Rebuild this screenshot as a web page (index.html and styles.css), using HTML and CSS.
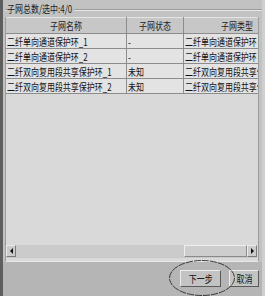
FILE: index.html
```html
<!DOCTYPE html>
<html>
<head>
<meta charset="utf-8">
<link rel="stylesheet" href="styles.css">
</head>
<body>
<div class="win">
  <div class="group">
    <div class="legend"><span class="t legend-text">子网总数/选中:4/0</span></div>
    <div class="panel">
      <div class="grid-wrap">
        <table class="grid">
          <colgroup><col class="c1"><col class="c2"><col class="c3"></colgroup>
          <thead>
            <tr><th><span class="t tc">子网名称</span></th><th><span class="t tc">子网状态</span></th><th><span class="t tc">子网类型</span></th></tr>
          </thead>
          <tbody>
            <tr><td><span class="t">二纤单向通道保护环_1</span></td><td><span class="t">-</span></td><td><span class="t">二纤单向通道保护环</span></td></tr>
            <tr><td><span class="t">二纤单向通道保护环_2</span></td><td><span class="t">-</span></td><td><span class="t">二纤单向通道保护环</span></td></tr>
            <tr><td><span class="t">二纤双向复用段共享保护环_1</span></td><td><span class="t">未知</span></td><td><span class="t">二纤双向复用段共享保护环</span></td></tr>
            <tr><td><span class="t">二纤双向复用段共享保护环_2</span></td><td><span class="t">未知</span></td><td><span class="t">二纤双向复用段共享保护环</span></td></tr>
          </tbody>
        </table>
      </div>
      <div class="hscroll">
        <div class="sb-btn"><span class="arrow-left"></span></div>
        <div class="sb-track"></div>
        <div class="sb-thumb"></div>
        <div class="sb-btn"><span class="arrow-right"></span></div>
      </div>
    </div>
  </div>
  <div class="buttons">
    <div class="btn btn-next"><span class="t tc">下一步</span></div>
    <div class="btn btn-cancel"><span class="t tc">取消</span></div>
  </div>
  <svg class="mark" width="70" height="40" viewBox="0 0 70 40"><ellipse cx="34" cy="19" rx="32.5" ry="17.5" fill="none" stroke="#2a2a2a" stroke-width="0.9" stroke-dasharray="7 1"/></svg>
</div>
</body>
</html>
```

FILE: styles.css
```css
* { box-sizing: border-box; }
html, body { margin: 0; padding: 0; }
body {
  width: 265px;
  height: 296px;
  overflow: hidden;
  background: #bdbdbd;
  font-family: "Noto Sans CJK SC", "Liberation Sans", sans-serif;
  font-size: 10.5px;
  color: #111;
}
.t {
  display: inline-block;
  white-space: nowrap;
  transform: scaleX(0.76);
  transform-origin: left center;
}
.tc { transform-origin: center center; }
.win {
  position: relative;
  width: 265px;
  height: 296px;
  border-left: 3px solid #5e5e5e;
  border-right: 3px solid #cfcfcf;
  background: #c2c2c2;
  display: flex;
  flex-direction: column;
}
.group {
  padding-left: 2px;
}
.legend {
  height: 17px;
  padding-top: 1px;
  padding-left: 2px;
  background: linear-gradient(to bottom, transparent 9px, #9a9a9a 9px, #9a9a9a 10px, #e6e6e6 10px, #e6e6e6 11px, transparent 11px);
}
.legend-text {
  line-height: 13px;
  color: #222;
  background: #c2c2c2;
  padding-right: 3px;
}
.panel {
  width: 254px;
  height: 245px;
  background: #d9d9d9;
  border-left: 1px solid #9c9c9c;
  border-right: 1px solid #9c9c9c;
  border-bottom: 1px solid #e8e8e8;
  display: flex;
  flex-direction: column;
}
.grid-wrap {
  flex: 1;
  overflow: hidden;
}
.grid {
  border-collapse: collapse;
  table-layout: fixed;
  width: 285px;
}
.c1 { width: 120px; }
.c2 { width: 57px; }
.c3 { width: 108px; }
.grid th {
  height: 16px;
  background: #c7c7c7;
  font-weight: normal;
  color: #222;
  border-right: 1px solid #8c8c8c;
  border-bottom: 1px solid #8c8c8c;
  border-top: 1px solid #e4e4e4;
  padding: 0;
  text-align: center;
  white-space: nowrap;
  overflow: hidden;
  line-height: 13px;
}
.grid td {
  height: 15px;
  background: #e3e3e3;
  border-right: 1px solid #8c8c8c;
  border-bottom: 1px solid #8c8c8c;
  padding: 0 0 0 1px;
  white-space: nowrap;
  overflow: hidden;
  line-height: 13px;
}
.hscroll {
  height: 13px;
  margin: 0 1px 3px 0;
  display: flex;
  background: #c9c9c9;
}
.sb-btn {
  width: 10px;
  height: 12px;
  background: #cbcbcb;
  border: 1px solid;
  border-color: #ececec #7a7a7a #7a7a7a #ececec;
  display: flex;
  align-items: center;
  justify-content: center;
}
.arrow-left {
  width: 0; height: 0;
  border-top: 3px solid transparent;
  border-bottom: 3px solid transparent;
  border-right: 3px solid #111;
}
.arrow-right {
  width: 0; height: 0;
  border-top: 3px solid transparent;
  border-bottom: 3px solid transparent;
  border-left: 3px solid #111;
}
.sb-track {
  flex: 1;
  height: 12px;
  background-color: #e8e8e8;
  background-image: radial-gradient(circle, #a8a8a8 0.6px, transparent 0.8px);
  background-size: 2px 2px;
}
.sb-thumb {
  width: 63px;
  height: 12px;
  background: #cdcdcd;
  border: 1px solid;
  border-color: #efefef #8a8a8a #8a8a8a #efefef;
}
.buttons {
  flex: 1;
  background: #b5b5b5;
  display: flex;
  justify-content: flex-end;
  align-items: flex-start;
  gap: 8px;
  padding: 8px 3px 0 0;
}
.btn {
  height: 17px;
  background: #c3c3c3;
  border: 1px solid;
  border-color: #ececec #5a5a5a #5a5a5a #ececec;
  display: flex;
  align-items: center;
  justify-content: center;
  color: #111;
  line-height: 13px;
}
.btn-next { width: 41px; }
.btn-cancel { width: 30px; }
.mark {
  position: absolute;
  left: 165px;
  top: 259px;
}
```
